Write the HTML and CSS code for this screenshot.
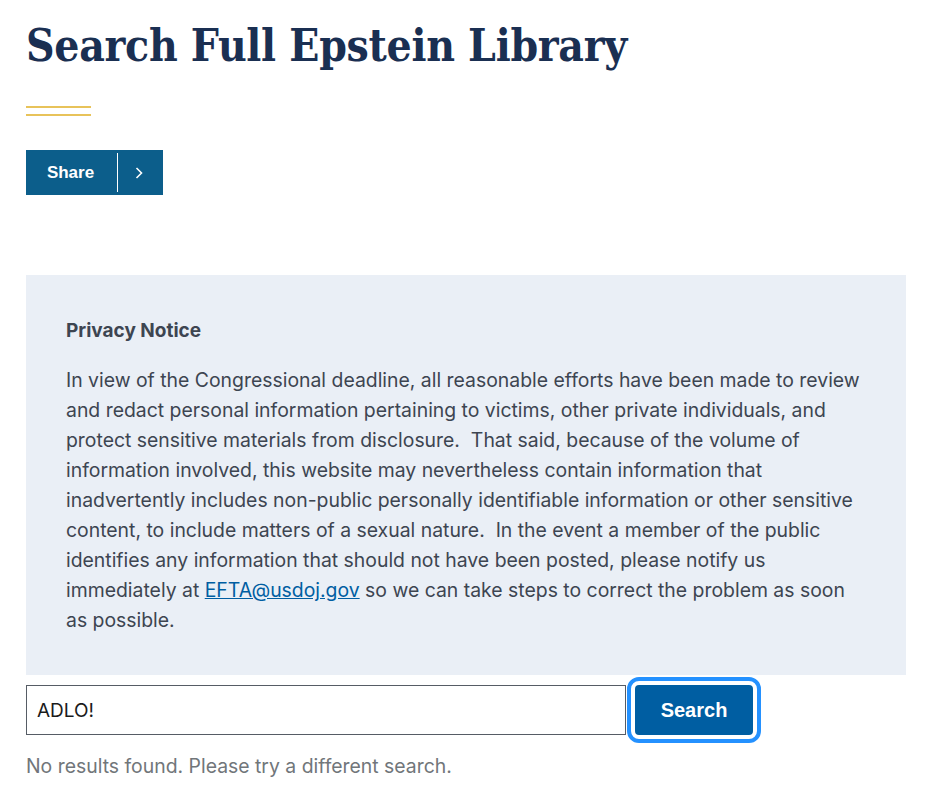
FILE: index.html
```html
<!DOCTYPE html>
<html lang="en">
<head>
<meta charset="utf-8">
<title>Search Full Epstein Library</title>
<link rel="stylesheet" href="styles.css">
</head>
<body>
<main class="page">
  <h1 class="title">Search Full Epstein Library</h1>
  <div class="rule"></div>
  <div class="share">
    <button class="share-btn" type="button">Share</button>
    <span class="share-divider"></span>
    <button class="share-toggle" type="button" aria-label="Open share options">
      <svg width="10" height="14" viewBox="0 0 10 14" aria-hidden="true"><path d="M2.5 2 L7.5 7 L2.5 12" fill="none" stroke="#fff" stroke-width="1.6"/></svg>
    </button>
  </div>
  <section class="notice">
    <h2 class="notice-title">Privacy Notice</h2>
    <p class="notice-text">In view of the Congressional deadline, all reasonable efforts have been made to review and redact personal information pertaining to victims, other private individuals, and protect sensitive materials from disclosure.&nbsp; That said, because of the volume of information involved, this website may nevertheless contain information that inadvertently includes non-public personally identifiable information or other sensitive content, to include matters of a sexual nature.&nbsp; In the event a member of the public identifies any information that should not have been posted, please notify us immediately at <a href="#">EFTA@usdoj.gov</a> so we can take steps to correct the problem as soon as possible.</p>
  </section>
  <form class="search">
    <input class="search-input" type="text" value="ADLO!">
    <button class="search-btn" type="button">Search</button>
  </form>
  <p class="no-results">No results found. Please try a different search.</p>
</main>
</body>
</html>
```
FILE: styles.css
```css
* { box-sizing: border-box; }
body {
  margin: 0;
  background: #fff;
  font-family: "Inter", "Noto Sans", sans-serif;
  color: #3d4551;
}
.page {
  padding: 16px 22px 0 26px;
}
.title {
  margin: 0;
  font-family: "DejaVu Serif Condensed", "DejaVu Serif", serif;
  font-stretch: condensed;
  font-weight: 700;
  font-size: 44px;
  line-height: 60px;
  color: #1a2f52;
  letter-spacing: -0.3px;
}
.rule {
  margin-top: 30px;
  width: 65px;
  height: 10px;
  border-top: 2px solid #e8c35a;
  border-bottom: 2px solid #e8c35a;
}
.share {
  margin-top: 34px;
  display: inline-flex;
  align-items: stretch;
  height: 45px;
  background: #0c5e8b;
  padding: 3px 0;
}
.share-btn, .share-toggle {
  border: 0;
  background: transparent;
  color: #fff;
  cursor: pointer;
  font-family: "Liberation Sans", Arial, sans-serif;
}
.share-btn {
  width: 91px;
  font-weight: 700;
  font-size: 17px;
  padding: 0 2px 0 0;
}
.share-divider {
  width: 1px;
  background: #fff;
}
.share-toggle {
  width: 45px;
  display: flex;
  align-items: center;
  justify-content: center;
  padding: 0 4px 0 0;
}
.notice {
  margin-top: 80px;
  width: 880px;
  background: #eaeff6;
  padding: 42px 39px 40px 40px;
}
.notice-title {
  margin: 0 0 20px;
  font-size: 19px;
  font-weight: 700;
  line-height: 28px;
  color: #3d4551;
}
.notice-text {
  margin: 0;
  font-size: 19.4px;
  line-height: 30px;
  color: #3d4551;
}
.notice-text a {
  color: #005ea2;
  text-decoration: underline;
}
.search {
  margin-top: 10px;
  display: flex;
  align-items: center;
  gap: 9px;
}
.search-input {
  width: 600px;
  height: 50px;
  border: 1px solid #565c65;
  padding: 0 10px;
  font-family: "Inter", "Noto Sans", sans-serif;
  font-size: 19px;
  color: #1b1b1b;
  border-radius: 0;
}
.search-btn {
  width: 118px;
  height: 50px;
  border: 0;
  border-radius: 4px;
  background: #005ea2;
  color: #fff;
  font-family: "Liberation Sans", Arial, sans-serif;
  font-weight: 700;
  font-size: 20px;
  outline: 4px solid #2491ff;
  outline-offset: 4px;
}
.no-results {
  margin: 17px 0 0;
  font-size: 19.4px;
  line-height: 28px;
  color: #71767a;
}
```
